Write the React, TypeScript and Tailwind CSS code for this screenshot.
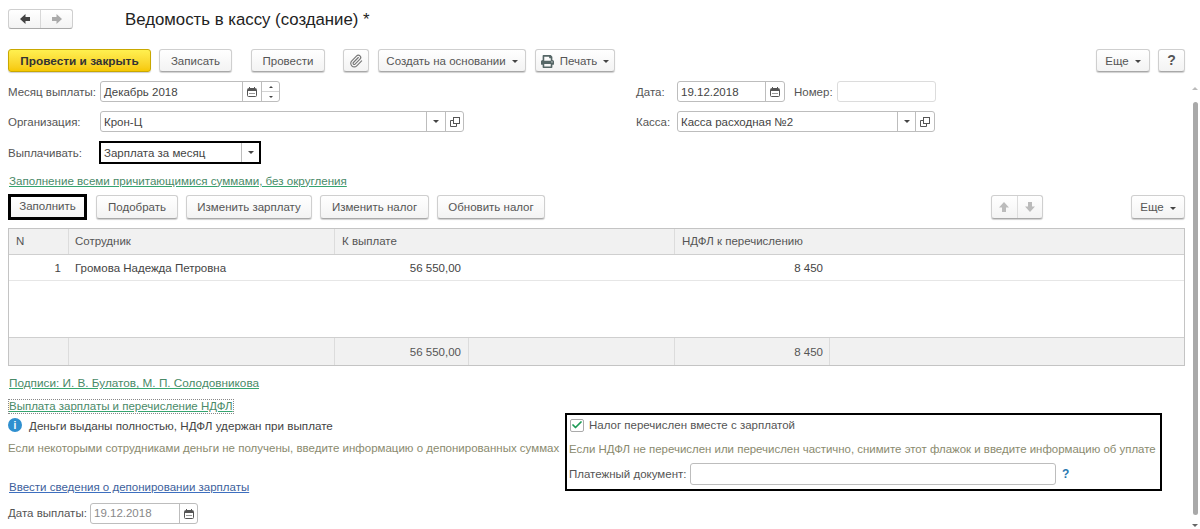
import { Check, Paperclip } from "lucide-react";
import { FaPrint } from "react-icons/fa";

const btn =
  "flex items-center justify-center h-full pt-[2px] rounded-[3px] border border-[#cfcfcf] border-b-[#a8a8a8] bg-gradient-to-b from-white to-[#f3f3f3] shadow-[0_1px_1px_#d0d0d0] text-[#555] whitespace-nowrap";
const field = "flex items-center h-[21px] rounded-[3px] border border-[#bdbdbd] bg-white text-[#444]";
const fieldText = "flex-1 pl-[3px] pt-[2px]";
const cell = "flex items-center border-r border-[#dcdcdc]";
const label = "shrink-0 whitespace-nowrap pt-[2px]";

function Caret() {
  return <span className="ml-[6px] h-0 w-0 border-x-[3px] border-t-[3px] border-x-transparent border-t-[#444]" />;
}

function CalendarIcon() {
  return (
    <svg width="10" height="10" viewBox="0 0 10 10" fill="none">
      <rect x="0.5" y="1.5" width="9" height="8" rx="1" stroke="#555" />
      <rect x="1" y="2" width="8" height="2" fill="#555" />
      <rect x="2" y="0" width="1" height="2" fill="#555" />
      <rect x="7" y="0" width="1" height="2" fill="#555" />
      <rect x="2" y="6" width="6" height="1" fill="#999" />
    </svg>
  );
}

function OpenIcon() {
  return (
    <svg width="10" height="10" viewBox="0 0 10 10" fill="none" stroke="#555">
      <rect x="3.5" y="0.5" width="6" height="6" />
      <path d="M3.5 3.5H0.5V9.5H6.5V6.5" />
    </svg>
  );
}

// блочная стрелка вверх, остальные поворотом
function BlockArrow({ color, className }: any) {
  return (
    <svg width="12" height="12" viewBox="0 0 12 12" className={className}>
      <path d="M6 1L11 6.5H8V11H4V6.5H1Z" fill={color} />
    </svg>
  );
}

function Seg({ w, children }: any) {
  return <span className={`${w} flex h-full shrink-0 items-center justify-center border-l border-[#bdbdbd]`}>{children}</span>;
}

function DropCaret() {
  return <span className="h-0 w-0 border-x-[3px] border-t-[3px] border-x-transparent border-t-[#444]" />;
}

export default function App() {
  return (
    <div className="relative h-[529px] w-[1200px] overflow-hidden bg-white px-[8px] pt-[9px] font-['Liberation_Sans',Arial,sans-serif] text-[11.5px] text-[#555]">
      {/* шапка */}
      <div className="flex h-[20px] items-center">
        <div className="flex h-[20px] w-[65px] rounded-[3px] border border-[#cfcfcf] border-b-[#a8a8a8] bg-gradient-to-b from-white to-[#f3f3f3]">
          <span className="flex flex-1 items-center justify-center border-r border-[#d8d8d8]">
            <BlockArrow color="#444" className="-rotate-90" />
          </span>
          <span className="flex flex-1 items-center justify-center">
            <BlockArrow color="#aaa" className="rotate-90" />
          </span>
        </div>
        <div className="ml-[52px] pt-[2px] text-[16.8px] text-[#222]">Ведомость в кассу (создание) *</div>
      </div>

      {/* командная панель */}
      <div className="mt-[20px] flex h-[23px]">
        <button className="flex h-full w-[143px] items-center justify-center rounded-[3px] border border-[#c9a800] bg-gradient-to-b from-[#fff04f] to-[#f6c800] pt-[2px] text-[11.8px] font-bold text-[#333] shadow-[0_1px_1px_#d0d0d0]">
          Провести и закрыть
        </button>
        <button className={`${btn} ml-[8px] w-[73px]`}>Записать</button>
        <button className={`${btn} ml-[19px] w-[74px]`}>Провести</button>
        <button className={`${btn} ml-[18px] w-[26px] !pt-0`}>
          <Paperclip size={14} color="#777" />
        </button>
        <button className={`${btn} ml-[9px] w-[148px]`}>
          Создать на основании
          <Caret />
        </button>
        <button className={`${btn} ml-[9px] w-[80px]`}>
          <FaPrint size={13} color="#566" className="mr-[6px]" />
          Печать
          <Caret />
        </button>
        <button className={`${btn} ml-[481px] w-[54px]`}>
          Еще
          <Caret />
        </button>
        <button className={`${btn} ml-[8px] w-[27px] !pt-0 text-[14px] font-bold`}>?</button>
      </div>

      {/* реквизиты */}
      <div className="mt-[9px] flex">
        <div className="w-[628px]">
          <div className="flex h-[21px] items-center">
            <span className={`${label} w-[92px]`}>Месяц выплаты:</span>
            <div className={`${field} w-[180px]`}>
              <span className={fieldText}>Декабрь 2018</span>
              <Seg w="w-[19px]">
                <CalendarIcon />
              </Seg>
              <Seg w="w-[18px]">
                <span className="flex h-full w-full flex-col items-center">
                  <span className="flex w-full flex-1 items-center justify-center border-b border-[#d4d4d4]">
                    <span className="h-0 w-0 border-x-[2px] border-b-[2px] border-x-transparent border-b-[#444]" />
                  </span>
                  <span className="flex w-full flex-1 items-center justify-center">
                    <span className="h-0 w-0 border-x-[2px] border-t-[2px] border-x-transparent border-t-[#444]" />
                  </span>
                </span>
              </Seg>
            </div>
          </div>
          <div className="mt-[9px] flex h-[21px] items-center">
            <span className={`${label} w-[92px]`}>Организация:</span>
            <div className={`${field} w-[364px]`}>
              <span className={fieldText}>Крон-Ц</span>
              <Seg w="w-[19px]">
                <DropCaret />
              </Seg>
              <Seg w="w-[18px]">
                <OpenIcon />
              </Seg>
            </div>
          </div>
          <div className="mt-[9px] flex h-[23px] items-center">
            <span className={`${label} w-[91px]`}>Выплачивать:</span>
            <div className="flex h-[23px] w-[162px] items-center border-2 border-black bg-white text-[#444]">
              <span className={fieldText}>Зарплата за месяц</span>
              <Seg w="w-[18px]">
                <DropCaret />
              </Seg>
            </div>
          </div>
        </div>
        <div>
          <div className="flex h-[21px] items-center">
            <span className={`${label} w-[41px]`}>Дата:</span>
            <div className={`${field} w-[108px]`}>
              <span className={fieldText}>19.12.2018</span>
              <Seg w="w-[19px]">
                <CalendarIcon />
              </Seg>
            </div>
            <span className={`${label} ml-[9px] w-[43px]`}>Номер:</span>
            <div className="h-[21px] w-[99px] rounded-[3px] border border-[#dcdcdc]" />
          </div>
          <div className="mt-[9px] flex h-[21px] items-center">
            <span className={`${label} w-[41px]`}>Касса:</span>
            <div className={`${field} w-[258px]`}>
              <span className={fieldText}>Касса расходная №2</span>
              <Seg w="w-[18px]">
                <DropCaret />
              </Seg>
              <Seg w="w-[19px]">
                <OpenIcon />
              </Seg>
            </div>
          </div>
        </div>
      </div>

      <div className="mt-[9px] flex h-[15px] items-center pl-[1px]">
        <span className="text-[11.6px] text-[#4a8a68] underline decoration-[#35a570]">Заполнение всеми причитающимися суммами, без округления</span>
      </div>

      {/* кнопки таблицы */}
      <div className="mt-[6px] flex h-[26px] items-center">
        <button className="flex h-[26px] w-[79px] items-center justify-center border-[3px] border-black bg-gradient-to-b from-white to-[#f3f3f3]">
          Заполнить
        </button>
        <div className="ml-[9px] flex h-[24px]">
          <button className={`${btn} w-[82px]`}>Подобрать</button>
          <button className={`${btn} ml-[8px] w-[126px]`}>Изменить зарплату</button>
          <button className={`${btn} ml-[8px] w-[109px]`}>Изменить налог</button>
          <button className={`${btn} ml-[8px] w-[108px]`}>Обновить налог</button>
          <div className={`${btn} ml-[446px] w-[52px] !pt-0`}>
            <span className="flex h-full flex-1 items-center justify-center border-r border-[#dcdcdc]">
              <BlockArrow color="#bbb" />
            </span>
            <span className="flex h-full flex-1 items-center justify-center">
              <BlockArrow color="#bbb" className="rotate-180" />
            </span>
          </div>
          <button className={`${btn} ml-[88px] w-[54px]`}>
            Еще
            <Caret />
          </button>
        </div>
      </div>

      {/* таблица */}
      <div className="mt-[8px] flex h-[138px] w-[1177px] flex-col border border-[#c4c4c4]">
        <div className="grid h-[26px] grid-cols-[60px_266px_340px_1fr] border-b border-[#cfcfcf] bg-[#f1f1f1]">
          <div className={`${cell} pl-[7px]`}>N</div>
          <div className={`${cell} pl-[6px]`}>Сотрудник</div>
          <div className={`${cell} pl-[7px]`}>К выплате</div>
          <div className="flex items-center pl-[7px]">НДФЛ к перечислению</div>
        </div>
        <div className="grid h-[26px] grid-cols-[60px_266px_134px_206px_155px_1fr] border-b border-[#e6e6e6] pt-[3px] text-[#444]">
          <div className="flex items-center justify-end pr-[8px]">1</div>
          <div className="flex items-center pl-[6px]">Громова Надежда Петровна</div>
          <div className="flex items-center justify-end pr-[8px]">56 550,00</div>
          <div />
          <div className="flex items-center justify-end pr-[7px]">8 450</div>
        </div>
        <div className="flex-1" />
        <div className="grid h-[28px] grid-cols-[60px_266px_134px_206px_155px_1fr] border-t border-[#cfcfcf] bg-[#f1f1f1]">
          <div className={cell} />
          <div className={cell} />
          <div className={`${cell} justify-end pr-[7px] pt-[2px]`}>56 550,00</div>
          <div className={cell} />
          <div className={`${cell} justify-end pr-[6px] pt-[2px]`}>8 450</div>
          <div />
        </div>
      </div>

      <div className="mt-[9px] flex h-[15px] items-center pl-[1px] pt-[1px]">
        <span className="text-[11.75px] text-[#4a8a68] underline decoration-[#35a570]">Подписи: И. В. Булатов, М. П. Солодовникова</span>
      </div>

      {/* нижняя часть */}
      <div className="mt-[9px] flex">
        <div className="w-[557px] shrink-0">
          <div className="flex h-[15px]">
            <span className="flex items-center border border-dotted border-[#888] text-[#4a8a68] underline decoration-[#35a570]">
              Выплата зарплаты и перечисление НДФЛ
            </span>
          </div>
          <div className="mt-[4px] flex h-[14px] items-center text-[#444]">
            <span className="flex h-[14px] w-[14px] items-center justify-center rounded-full bg-[#2f8fcf] text-[10px] font-bold text-white">i</span>
            <span className="ml-[7px] pt-[1px] text-[11.65px]">Деньги выданы полностью, НДФЛ удержан при выплате</span>
          </div>
          <div className="mt-[9px] flex h-[14px] items-center whitespace-nowrap pt-[1px] text-[#8a8a6e]">
            Если некоторыми сотрудниками деньги не получены, введите информацию о депонированных суммах
          </div>
          <div className="mt-[25px] flex h-[14px] items-center pl-[1px] pt-[1px]">
            <span className="text-[#3d5f9c] underline decoration-[#3d6fc0]">Ввести сведения о депонировании зарплаты</span>
          </div>
          <div className="mt-[9px] flex h-[21px] items-center">
            <span className="w-[82px] shrink-0 whitespace-nowrap">Дата выплаты:</span>
            <div className={`${field} w-[108px] !text-[#888]`}>
              <span className="flex-1 pl-[3px]">19.12.2018</span>
              <Seg w="w-[18px]">
                <CalendarIcon />
              </Seg>
            </div>
          </div>
        </div>

        <div className="mt-[14px] h-[78px] w-[597px] shrink-0 border-2 border-black px-[2px] pt-[3px]">
          <div className="flex h-[14px] items-center">
            <span className="ml-[1px] flex h-[13px] w-[14px] items-center justify-center rounded-[2px] border border-[#aaa]">
              <Check size={14} strokeWidth={3.5} color="#1d9a55" />
            </span>
            <span className="ml-[5px] pt-[1px]">Налог перечислен вместе с зарплатой</span>
          </div>
          <div className="mt-[10px] flex h-[14px] items-center whitespace-nowrap pt-[1px] text-[11.45px] text-[#8a8a6e]">
            Если НДФЛ не перечислен или перечислен частично, снимите этот флажок и введите информацию об уплате
          </div>
          <div className="mt-[7px] flex h-[22px] items-center">
            <span className={`${label} w-[121px]`}>Платежный документ:</span>
            <div className="h-[22px] w-[366px] rounded-[3px] border border-[#bdbdbd]" />
            <span className="ml-[6px] text-[12px] font-bold text-[#2a78b0]">?</span>
          </div>
        </div>
      </div>

      {/* полоса прокрутки */}
      <div className="absolute right-[2px] top-[87px] flex h-[442px] w-[6px] flex-col items-center">
        <span className="h-0 w-0 border-x-[3px] border-b-[3px] border-x-transparent border-b-[#bbb]" />
        <div className="mt-[12px] h-[413px] w-[5px] rounded-full bg-[#a9a9a9]" />
        <span className="mt-[9px] h-0 w-0 border-x-[3px] border-t-[3px] border-x-transparent border-t-[#666]" />
      </div>
    </div>
  );
}
